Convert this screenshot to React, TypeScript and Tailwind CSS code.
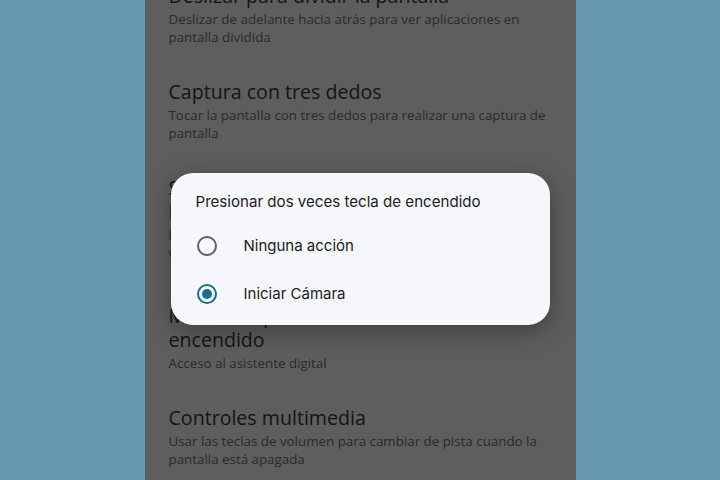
import React from "react";

type Setting = {
    title: string[];
    subtitle: string[];
    extra?: string;
};

const settings: Setting[] = [
    {
        title: ["Deslizar para dividir la pantalla"],
        subtitle: ["Deslizar de adelante hacia atrás para ver aplicaciones en", "pantalla dividida"],
    },
    {
        title: ["Captura con tres dedos"],
        subtitle: ["Tocar la pantalla con tres dedos para realizar una captura de", "pantalla"],
    },
    {
        title: ["Sensor de gestos en pantalla", "Iniciar con doble toque"],
        subtitle: ["Levantar para activar la pantalla y", "ver notificaciones"],
        extra: "mb-2",
    },
    {
        title: ["Mantener presionada tecla de", "encendido"],
        subtitle: ["Acceso al asistente digital"],
    },
    {
        title: ["Controles multimedia"],
        subtitle: ["Usar las teclas de volumen para cambiar de pista cuando la", "pantalla está apagada"],
    },
];

const options = [
    { label: "Ninguna acción", checked: false },
    { label: "Iniciar Cámara", checked: true },
];

const Radio: React.FC<{ checked: boolean }> = ({ checked }) => (
    <span
        className={
            checked
                ? "flex h-5 w-5 items-center justify-center rounded-full border-2 border-[#17708f]"
                : "flex h-5 w-5 items-center justify-center rounded-full border-2 border-[#5f6166]"
        }
    >
        {checked && <span className="h-[10px] w-[10px] rounded-full bg-[#17708f]" />}
    </span>
);

export default function App() {
    return (
        <div className="flex h-[480px] w-[720px] justify-center overflow-hidden bg-[#6699b0]">
            <div className="relative h-full w-[431px] overflow-hidden bg-[#5e5e5e] font-['Open_Sans',sans-serif]">
                <div className="-mt-4 flex flex-col gap-[34px] px-6">
                    {settings.map((s) => (
                        <div key={s.title[0]} className={"flex flex-col gap-[2px] " + (s.extra ?? "")}>
                            <div className="text-[19.6px] leading-6 text-[#141414]">
                                {s.title.map((t) => (
                                    <div key={t}>{t}</div>
                                ))}
                            </div>
                            <div className="text-[13.35px] leading-[18px] text-[#2a2a2a]">
                                {s.subtitle.map((t) => (
                                    <div key={t}>{t}</div>
                                ))}
                            </div>
                        </div>
                    ))}
                </div>

                {/* dialog */}
                <div className="absolute left-[26px] top-[173px] w-[379px] rounded-[22px] bg-[#f6f7fb] pb-[7px] pt-[18px] shadow-[0_6px_24px_rgba(0,0,0,0.35)] font-['Inter',sans-serif]">
                    <div className="px-[25px] text-[15.1px] leading-[22px] text-[#1c1c1e]">
                        Presionar dos veces tecla de encendido
                    </div>
                    <div className="mt-[9px] flex flex-col">
                        {options.map((o) => (
                            <div key={o.label} className="flex h-12 items-center pl-[26px]">
                                <Radio checked={o.checked} />
                                <span className="ml-[27px] text-[15px] text-[#1c1c1e]">{o.label}</span>
                            </div>
                        ))}
                    </div>
                </div>
            </div>
        </div>
    );
}
